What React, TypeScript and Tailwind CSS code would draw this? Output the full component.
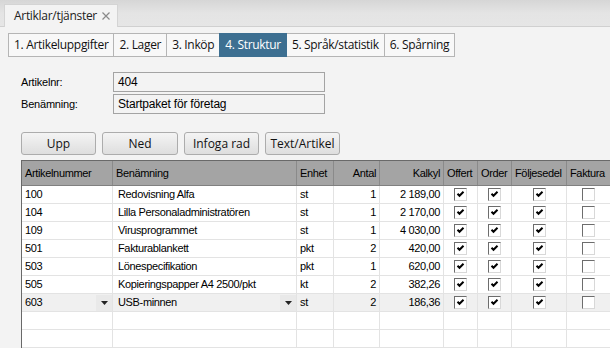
const tabs = ['1. Artikeluppgifter', '2. Lager', '3. Inköp', '4. Struktur', '5. Språk/statistik', '6. Spårning'];

const cols = [
  { label: 'Artikelnummer', w: 'w-[91px]', right: false },
  { label: 'Benämning', w: 'w-[184px]', right: false },
  { label: 'Enhet', w: 'w-[37px]', right: false },
  { label: 'Antal', w: 'w-[46px]', right: true },
  { label: 'Kalkyl', w: 'w-[64px]', right: true },
  { label: 'Offert', w: 'w-[34px]', right: false },
  { label: 'Order', w: 'w-[34px]', right: false },
  { label: 'Följesedel', w: 'w-[55px]', right: false },
  { label: 'Faktura', w: 'w-[60px]', right: false },
];

const rows = [
  { nr: '100', name: 'Redovisning Alfa', unit: 'st', qty: '1', price: '2 189,00' },
  { nr: '104', name: 'Lilla Personaladministratören', unit: 'st', qty: '1', price: '2 170,00' },
  { nr: '109', name: 'Virusprogrammet', unit: 'st', qty: '1', price: '4 030,00' },
  { nr: '501', name: 'Fakturablankett', unit: 'pkt', qty: '2', price: '420,00' },
  { nr: '503', name: 'Lönespecifikation', unit: 'pkt', qty: '1', price: '620,00' },
  { nr: '505', name: 'Kopieringspapper A4 2500/pkt', unit: 'kt', qty: '2', price: '382,26' },
  { nr: '603', name: 'USB-minnen', unit: 'st', qty: '2', price: '186,36', current: true },
];

function Check({ on }: { on: boolean }) {
  return (
    <div className="w-[13px] h-[13px] bg-white border border-t-[#6d6d6d] border-l-[#6d6d6d] border-b-[#d8d8d8] border-r-[#d8d8d8] flex items-center justify-center">
      {on && (
        <svg width="9" height="9" viewBox="0 0 9 9">
          <path d="M1.5 3.8 L3.5 5.8 L7.5 1.8" stroke="#000" strokeWidth="2" fill="none" />
        </svg>
      )}
    </div>
  );
}

function DropArrow() {
  return (
    <span className="ml-auto w-[16px] h-[16px] bg-[#e9e9e9] flex items-center justify-center">
      <svg width="7" height="4" viewBox="0 0 7 4"><path d="M0 0 H7 L3.5 4 Z" fill="#222" /></svg>
    </span>
  );
}

export default function App() {
  return (
    <div className="w-[610px] h-[348px] overflow-hidden bg-[#f3f3f3] font-['Liberation_Sans',sans-serif] text-[11px] text-black">
      {/* Document tab strip */}
      <div className="h-[27px] bg-gradient-to-b from-[#d6d6d6] via-[#e4e4e4] to-[#e6e6e6] border-b border-[#d0d0d0] flex items-end pl-[4px]">
        <div className="w-[114px] h-[23px] -mb-px bg-[#f3f3f3] border border-b-0 border-[#d4d4d4] flex items-center pl-[9px] pr-[7px] font-['Open_Sans',sans-serif] text-[12px] tracking-[-0.3px] text-[#222]">
          <span>Artiklar/tjänster</span>
          <svg className="ml-auto" width="8" height="8" viewBox="0 0 8 8">
            <path d="M0.5 0.5 L7.5 7.5 M7.5 0.5 L0.5 7.5" stroke="#8a8a8a" strokeWidth="1.2" />
          </svg>
        </div>
      </div>

      {/* Page tabs */}
      <div className="flex mt-[6px] ml-[8px] h-[24px] font-['Open_Sans',sans-serif] text-[12px] tracking-[-0.32px]">
        {tabs.map((t, i) => (
          <div
            key={t}
            className={`px-[5px] flex items-center border ${i > 0 ? '-ml-px' : ''} ${
              i === 3 ? 'bg-[#3d6f91] border-[#3d6f91] text-white relative' : 'bg-[#f8f8f8] border-[#b5b5b5] text-[#111]'
            }`}
          >
            {t}
          </div>
        ))}
      </div>

      {/* Fields */}
      <div className="ml-[21px] mt-[15px] flex flex-col gap-[2px] tracking-[-0.2px]">
        <div className="flex items-center h-[20px]">
          <span className="w-[92px]">Artikelnr:</span>
          <div className="w-[212px] h-[20px] border border-[#a3a3a3] flex items-center px-[4px] text-[12px]">404</div>
        </div>
        <div className="flex items-center h-[20px]">
          <span className="w-[92px]">Benämning:</span>
          <div className="w-[212px] h-[20px] border border-[#a3a3a3] flex items-center px-[4px] text-[12px]">Startpaket för företag</div>
        </div>
      </div>

      {/* Buttons */}
      <div className="ml-[21px] mt-[18px] flex gap-[6px] font-['Open_Sans',sans-serif] text-[12px]">
        {['Upp', 'Ned', 'Infoga rad', 'Text/Artikel'].map((b, i) => (
          <button
            key={b}
            className={`h-[23px] rounded-[3px] border border-[#acacac] bg-gradient-to-b from-[#f4f4f4] to-[#dedede] text-[#111] ${
              ['w-[75px]', 'w-[76px]', 'w-[75px]', 'w-[75px]'][i]
            }`}
          >
            {b}
          </button>
        ))}
      </div>

      {/* Grid */}
      <div className="ml-[21px] mt-[5px] bg-white border-l border-t border-[#696969] tracking-[-0.35px]">
        <div className="flex h-[25px] bg-[#a4a4a4] border-b border-[#808080]">
          {cols.map((c, i) => (
            <div
              key={c.label}
              className={`${c.w} shrink-0 px-[3px] flex items-center ${c.right ? 'justify-end' : ''} ${
                i < cols.length - 1 ? 'border-r border-[#8a8a8a]' : ''
              }`}
            >
              {c.label}
            </div>
          ))}
        </div>
        {[...rows, null, null].map((r, ri) => (
          <div key={ri} className={`flex h-[18px] border-b border-[#e3e3e3] ${r?.current ? 'bg-[#f0f0f0]' : ''}`}>
            <div className="w-[91px] shrink-0 border-r border-[#e3e3e3] pl-[3px] flex items-center">
              {r?.nr}
              {r?.current && <DropArrow />}
            </div>
            <div className="w-[184px] shrink-0 border-r border-[#e3e3e3] pl-[5px] flex items-center">
              {r?.name}
              {r?.current && <DropArrow />}
            </div>
            <div className="w-[37px] shrink-0 border-r border-[#e3e3e3] pl-[3px] flex items-center">{r?.unit}</div>
            <div className="w-[46px] shrink-0 border-r border-[#e3e3e3] pr-[3px] flex items-center justify-end">{r?.qty}</div>
            <div className="w-[64px] shrink-0 border-r border-[#e3e3e3] pr-[3px] flex items-center justify-end">{r?.price}</div>
            {['w-[34px]', 'w-[34px]', 'w-[55px]', 'w-[60px]'].map((w, ci) => (
              <div
                key={ci}
                className={`${w} shrink-0 ${ci < 3 ? 'border-r border-[#e3e3e3]' : ''} flex items-center ${ci === 3 ? 'pl-[15px]' : 'justify-center'}`}
              >
                {r && <Check on={ci < 3} />}
              </div>
            ))}
          </div>
        ))}
      </div>
    </div>
  );
}
